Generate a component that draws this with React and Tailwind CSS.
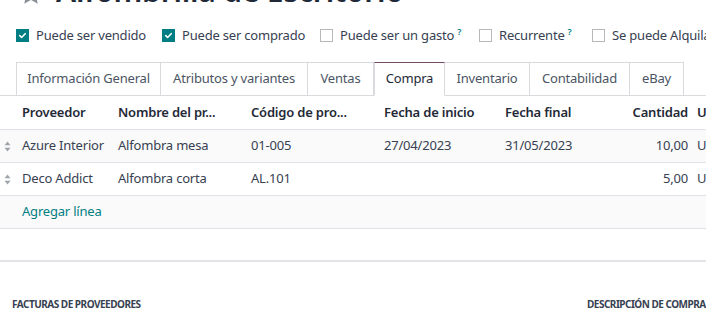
import React from "react";

const checks = [
  { label: "Puede ser vendido", on: true, w: "w-[146px]" },
  { label: "Puede ser comprado", on: true, w: "w-[158px]" },
  { label: "Puede ser un gasto", on: false, help: true, w: "w-[159px]" },
  { label: "Recurrente", on: false, help: true, w: "w-[113px]" },
  { label: "Se puede Alquilar", on: false, w: "w-[140px]" },
];

const tabs = [
  { t: "Información General", w: "w-[145px]" },
  { t: "Atributos y variantes", w: "w-[147px]" },
  { t: "Ventas", w: "w-[66px]" },
  { t: "Compra", w: "w-[71px]" },
  { t: "Inventario", w: "w-[85px]" },
  { t: "Contabilidad", w: "w-[100px]" },
  { t: "eBay", w: "w-[54px]" },
];

const rows = [
  { prov: "Azure Interior", nombre: "Alfombra mesa", codigo: "01-005", ini: "27/04/2023", fin: "31/05/2023", qty: "10,00" },
  { prov: "Deco Addict", nombre: "Alfombra corta", codigo: "AL.101", ini: "", fin: "", qty: "5,00" },
];

function Check({ on }) {
  if (on) {
    return (
      <span className="flex h-[13px] w-[13px] shrink-0 items-center justify-center bg-[#017e84]">
        <svg width="9" height="9" viewBox="0 0 10 10">
          <path d="M2 5.2l2 2 4-4.2" fill="none" stroke="white" strokeWidth="1.8" strokeLinecap="round" strokeLinejoin="round" />
        </svg>
      </span>
    );
  }
  return <span className="h-[13px] w-[13px] shrink-0 border border-[#b8b8b8] bg-white" />;
}

function Handle() {
  return (
    <svg width="7" height="11" viewBox="0 0 7 11" className="text-[#a0a5ad]">
      <path d="M3.5 0.5L6.5 4.2H0.5z M3.5 10.5L6.5 6.8H0.5z" fill="currentColor" />
    </svg>
  );
}

export default function App() {
  return (
    <div className="h-[314px] w-[706px] overflow-hidden bg-white text-[13px] tracking-[-0.2px] text-[#374151] [font-family:'Noto_Sans','Open_Sans',sans-serif]">
      {/* titulo cortado arriba */}
      <div className="mt-[-25px] flex h-[32px] items-end gap-[14px] pl-[20px]">
        <svg width="22" height="22" viewBox="0 0 24 24" className="mb-[2px] text-[#8a8f98]">
          <path d="M12 2.5l2.9 6.1 6.6.8-4.9 4.6 1.3 6.6L12 17.3l-5.9 3.3 1.3-6.6-4.9-4.6 6.6-.8z" fill="none" stroke="currentColor" strokeWidth="2" />
        </svg>
        <span className="text-[30px] font-semibold leading-[32px] text-[#1f2937]">Alfombrilla de Escritorio</span>
      </div>

      {/* casillas */}
      <div className="mt-[19px] flex h-[19px] items-center whitespace-nowrap pl-[16px]">
        {checks.map((c, i) => (
          <div key={i} className={"flex shrink-0 items-center gap-[7px] " + c.w}>
            <Check on={c.on} />
            <span className="text-[#374151]">
              {c.label}
              {c.help && <sup className="ml-[3px] text-[9px] font-semibold text-[#017e84]">?</sup>}
            </span>
          </div>
        ))}
      </div>

      {/* pestañas */}
      <div className="mt-[17px] flex h-[34px] border-b border-[#d8dadd] pl-[16px]">
        {tabs.map(({ t, w }, i) => (
          <div
            key={t}
            className={
              "mb-[-1px] flex shrink-0 items-center justify-center whitespace-nowrap " +
              w +
              " " +
              (t === "Compra"
                ? "border border-b-white border-[#d8dadd] border-t-[#714b67] bg-white text-[#1f2937]"
                : "border-y border-r border-[#d8dadd] text-[#4b5563] " + (i === 0 ? "border-l" : ""))
            }
          >
            {t}
          </div>
        ))}
      </div>

      {/* tabla */}
      <div className="flex h-[34px] items-center border-b border-[#dee2e6] font-semibold text-[#1f2937] whitespace-nowrap">
        <div className="w-[22px] shrink-0" />
        <div className="w-[96px] shrink-0">Proveedor</div>
        <div className="w-[133px] shrink-0">Nombre del pr...</div>
        <div className="w-[133px] shrink-0">Código de pro...</div>
        <div className="w-[121px] shrink-0">Fecha de inicio</div>
        <div className="w-[95px] shrink-0">Fecha final</div>
        <div className="w-[88px] shrink-0 text-right">Cantidad</div>
        <div className="pl-[9px]">U</div>
      </div>

      {rows.map((r, i) => (
        <div
          key={i}
          className={"flex h-[33px] items-center border-b border-[#dee2e6] whitespace-nowrap " + (i === 0 ? "bg-[#fafafa]" : "bg-white")}
        >
          <div className="flex w-[22px] shrink-0 pl-[4px]">
            <Handle />
          </div>
          <div className="w-[96px] shrink-0">{r.prov}</div>
          <div className="w-[133px] shrink-0">{r.nombre}</div>
          <div className="w-[133px] shrink-0">{r.codigo}</div>
          <div className="w-[121px] shrink-0">{r.ini}</div>
          <div className="w-[95px] shrink-0">{r.fin}</div>
          <div className="w-[88px] shrink-0 text-right">{r.qty}</div>
          <div className="pl-[9px]">U</div>
        </div>
      ))}

      <div className="flex h-[33px] items-center border-b border-[#dee2e6] bg-[#fafafa] pl-[22px] text-[#017e84]">
        Agregar línea
      </div>

      <div className="mt-[31px] border-b-2 border-[#e2e4e8]" />

      {/* secciones */}
      <div className="mt-[35px] flex whitespace-nowrap text-[10px] font-bold uppercase tracking-[-0.5px] text-[#374151]">
        <div className="ml-[12px] w-[398px] shrink-0 border-b border-[#e2e4e8] pb-[3px]">Facturas de proveedores</div>
        <div className="ml-[177px] shrink-0 pb-[3px]">Descripción de compra</div>
      </div>
    </div>
  );
}
